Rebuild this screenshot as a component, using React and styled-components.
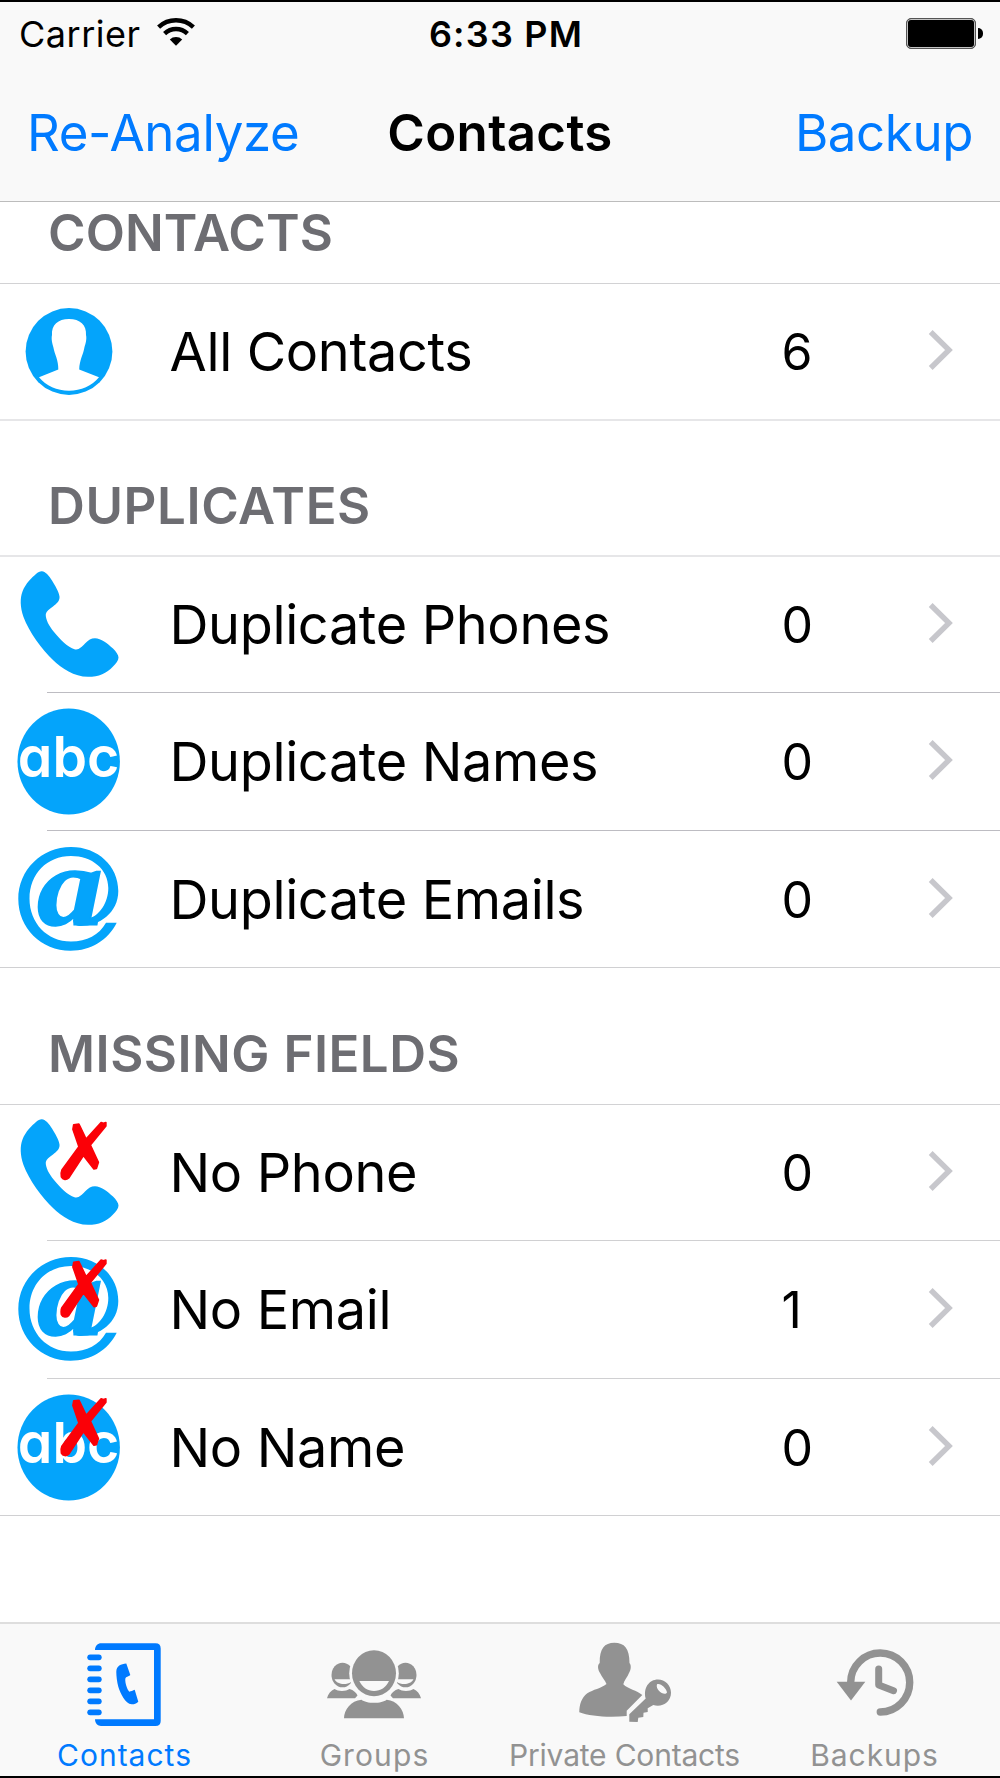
import React, { useState } from "react";
import styled, { createGlobalStyle } from "styled-components";

const BLUE = "#04a4fb";
const TINT = "#007aff";
const GREY = "#929292";

const AbcText = styled.text`
  fill: #fff;
  font-family: Inter, sans-serif;
  font-size: 57px;
  font-weight: 600;
  font-feature-settings: "cv11";
`;

const AtText = styled.text`
  fill: ${BLUE};
  stroke: ${BLUE};
  stroke-width: 1.5px;
  font-family: "Liberation Serif", serif;
  font-size: 115px;
  font-weight: 700;
  font-style: italic;
`;

const sections = [
  {
    title: "CONTACTS",
    height: 82,
    spacing: 0.1,
    rows: [
      { label: "All Contacts", count: 6, icon: "person", height: 137, thick: true },
    ],
  },
  {
    title: "DUPLICATES",
    height: 136,
    spacing: 0.6,
    thick: true,
    rows: [
      { label: "Duplicate Phones", count: 0, icon: "phone", height: 136, dark: true },
      { label: "Duplicate Names", count: 0, icon: "abc", height: 138, drop: 1, dark: true },
      { label: "Duplicate Emails", count: 0, icon: "at", height: 137, drop: 1 },
    ],
  },
  {
    title: "MISSING FIELDS",
    height: 137,
    spacing: 0.5,
    rows: [
      { label: "No Phone", count: 0, icon: "phone", crossed: true, height: 136 },
      { label: "No Email", count: 1, icon: "at", crossed: true, height: 138, drop: 1 },
      { label: "No Name", count: 0, icon: "abc", crossed: true, height: 137, drop: 1 },
    ],
  },
];

const icons = {
  person: (
    <>
      <circle cx="69" cy="67.5" r="43.4" fill={BLUE} />
      <path
        fill="#fff"
        d="M69 35C58 35 51.3 41 52 51C51 55 52.500 60 53.300 63C54.500 70 58.500 76 58.300 85.500L39 93.300C46 102 57 106.700 69 106.700C81 106.700 92 102 99 93.300L79.200 85.500C79.500 76 83.500 70 84.500 63C85.500 60 87 55 86 51C86.700 41 80 35 69 35Z"
      />
    </>
  ),
  phone: (
    <path
      fill={BLUE}
      d="M41.700 14.200C45 14 49 18.500 52 23.500C55 28.500 59 35 59.500 39.500C60 43.500 57 46.500 53 49.500C49 52.500 46.500 54 45.800 57C45.300 62 49 69 54 75C60 82.500 68 90.500 74.500 92.200C79 93.200 81.500 90 85 86.500C88.500 83 91 81.200 95 81.200C101 81.200 107.500 86.500 113 91.500C116 94.500 118.500 98 118.500 100.500C118.500 103.500 116 106.500 113 109.500C106.500 116.500 99 119.800 88 119.800C74 119.800 62 111.500 53 103C42 92.500 29 75 23.500 60C20 50 20 41 22.500 34.500C25.500 26.500 32 20.500 36 17C38 15 39.800 14.200 41.700 14.200Z"
    />
  ),
  abc: (
    <>
      <ellipse cx="68.700" cy="67.500" rx="51.200" ry="53" fill={BLUE} />
      <AbcText x="17.800" y="82.500" textLength="101.500" lengthAdjust="spacingAndGlyphs">abc</AbcText>
    </>
  ),
  at: (
    <>
      <path
        fill={BLUE}
        d="M116.700 90.700C108 108 91 118.700 70.500 118.700C41 118.700 18.300 96 18.300 67C18.300 38 41.500 15 71 15C98 15 118.300 34 118.300 59C118.300 81 99 94 81 94C76 94 73.500 92 73 88L87 81C87 84.500 88.500 85.800 91 85.500C99 83 108.300 71 108.300 56C108.300 37 92 24 71 24C47 24 29.500 42 29.500 66.500C29.500 91 47 109.500 71 109.500C87 109.500 99 103 106 90.700Z"
      />
      <AtText transform="translate(37 92.500) scale(1.15 1)">a</AtText>
    </>
  ),
};

const tabs = [
  {
    label: "Contacts",
    spacing: 1,
    art: (
      <>
        <path d="M95 26C95 22 98 19.300 101 19.300H155.500Q160.700 19.300 160.700 24.500V97Q160.700 102 155.500 102H101C98 102 95 99.500 95 95.300H154V26Z" />
        {[33.3, 44.3, 55.3, 66.3, 77.3, 88.3].map((y) => (
          <rect key={y} x="87.300" y={y - 2.9} width="14.400" height="5.800" rx="2.900" />
        ))}
        <path d="M116.300 48C116.300 42 121 40 126.300 39.600L130.300 51C129 52.500 125.500 52.500 125.300 55C125 59 127 65 129.300 67.700C131 67.500 133 66.500 134.700 65.800L138.300 77.700C136 80 133.500 80.500 131.700 80.300C125 79.500 120.500 69.500 118.300 62.700C117 58 116.300 52 116.300 48Z" />
      </>
    ),
  },
  {
    label: "Groups",
    spacing: 1.1,
    art: (
      <>
        <GroupSide />
        <g transform="translate(248 0) scale(-1 1)">
          <GroupSide />
        </g>
        <ellipse cx="124" cy="49.300" rx="24.800" ry="25.800" fill="#f9f9f9" />
        <ellipse cx="124" cy="49.300" rx="22" ry="23" />
        <path fill="#f9f9f9" d="M109.300 57H139C136 63.500 130.500 67 124 67C117.500 67 112.500 63.500 109.300 57Z" />
        <path d="M94 94.300C94 86 101 76.500 111.500 75.700C116 79.800 132 79.800 136.700 75.700C147 76.500 154 86 154 94.300Z" />
      </>
    ),
  },
  {
    label: "Private Contacts",
    spacing: -0.2,
    art: (
      <>
        <path d="M114.300 18.700C104.500 18.700 99.500 24.500 99.700 39C97 41 98 46 100 49C102 53 105 56.500 106.500 60C101 64.500 93 65.500 87.300 69.300C81.500 74 79.300 80.500 79.300 88.300C90 92.500 110 93.800 126.700 92V86.700L142.300 71C137 66.500 128 65 123.300 60.300C124 56.500 127.500 53 129 49C131 46 131.500 41 129.500 39C129.500 24.500 124.500 18.700 114.300 18.700Z" />
        <path
          fillRule="evenodd"
          d="M145.700 74.500L129.300 90.300V97.700L137.700 98L138.300 93.700L143.300 93L143.500 88.700L147.700 88V84.300L153.300 81C162 83.700 171 78 171 68.700C171 61 165 55.400 158 55.400C149 55.400 143 64 145.700 74.500ZM157 60.300C160 58.500 166.500 64 167 68.500C165 72.500 155 66.500 157 60.300Z"
        />
      </>
    ),
  },
  {
    label: "Backups",
    spacing: 0.9,
    art: (
      <>
        <path
          fill="none"
          stroke="currentColor"
          strokeWidth="7.400"
          strokeLinecap="round"
          d="M100.700 60V58.300A29.500 29.500 0 1 1 130.300 88"
        />
        <path d="M86.700 57.700H115.300L101 76.500Z" />
        <path
          fill="none"
          stroke="currentColor"
          strokeWidth="7"
          strokeLinecap="round"
          strokeLinejoin="round"
          d="M128.700 45V61L143.500 66.700"
        />
      </>
    ),
  },
];

function GroupSide() {
  return (
    <>
      <ellipse cx="92.500" cy="51" rx="11" ry="12.300" />
      <path fill="#f9f9f9" d="M84.500 55.300H101V58C96 61.500 87 60.500 84.500 55.300Z" />
      <path d="M77 74.300C78 70 81 66.500 84.500 65C88 67.500 96 67.500 99.500 65C103.500 66 106.500 69 107.500 71.500L105 74.300Z" />
    </>
  );
}

function Cross({ shift }) {
  return (
    <path
      transform={`translate(-0.6 ${shift})`}
      fill="#fb0007"
      stroke="#fb0007"
      strokeWidth="1.600"
      strokeLinejoin="round"
      d="M101.700 17.500L104 18.200L106.500 17.500V21L91 40L99 57.300L97 63.500L94.500 64L84 50.500L69.300 73C67 75 63.500 75 62 72C61.500 69 61.500 67 62.500 65L79.500 41.700L73.500 24.300L74.300 19.700L79.500 19L81 22L86.700 34Z"
    />
  );
}

export default function App() {
  const [active, setActive] = useState("Contacts");

  return (
    <Screen>
      <GlobalStyle />
      <StatusBar>
        <Carrier>
          <span>Carrier</span>
          <svg width="40" height="30" viewBox="0 0 40 30">
            <g fill="none" stroke="#000" strokeWidth="4.400">
              <path d="M2.600 9.200A25.400 25.400 0 0 1 37.400 9.200" />
              <path d="M8.600 15.600A16.300 16.300 0 0 1 31.400 15.600" />
            </g>
            <path d="M13.800 21.500A9 9 0 0 1 26.200 21.500L20 27.700Z" />
          </svg>
        </Carrier>
        <Clock>6:33 PM</Clock>
        <Battery>
          <BatteryBody />
          <BatteryNub />
        </Battery>
      </StatusBar>
      <NavBar>
        <NavButton $spacing={-0.35}>Re-Analyze</NavButton>
        <NavTitle>Contacts</NavTitle>
        <NavButton $right $spacing={-0.4}>Backup</NavButton>
      </NavBar>

      <List>
        {sections.map((section) => (
          <section key={section.title}>
            <SectionHeader
              $height={section.height}
              $spacing={section.spacing}
              $thick={section.thick}
            >
              {section.title}
            </SectionHeader>
            {section.rows.map((row, i) => (
              <Row
                key={row.label}
                $height={row.height}
                $drop={row.drop}
              >
                <RowIcon width="130" height="134" viewBox="0 0 130 134">
                  {icons[row.icon]}
                  {row.crossed && <Cross shift={i * 0.6} />}
                </RowIcon>
                <Label>{row.label}</Label>
                <Count>{row.count}</Count>
                <Chevron width="30" height="44" viewBox="0 0 30 44">
                  <path d="M3.700 4L22 22L3.700 40" />
                </Chevron>
                <Divider
                  $inset={i < section.rows.length - 1}
                  $thick={row.thick}
                  $dark={row.dark}
                />
              </Row>
            ))}
          </section>
        ))}
      </List>

      <TabBar>
        {tabs.map((tab) => (
          <Tab
            key={tab.label}
            $active={active === tab.label}
            onClick={() => setActive(tab.label)}
          >
            <svg width="250" height="110" viewBox="0 0 250 110" fill="currentColor">
              {tab.art}
            </svg>
            <TabLabel $spacing={tab.spacing}>{tab.label}</TabLabel>
          </Tab>
        ))}
      </TabBar>
    </Screen>
  );
}

const GlobalStyle = createGlobalStyle`
  * {
    box-sizing: border-box;
  }
  body {
    margin: 0;
    background: #fff;
    font-family: Inter, "Liberation Sans", sans-serif;
  }
  button {
    font: inherit;
    border: 0;
    padding: 0;
    background: none;
  }
`;

const Screen = styled.div`
  width: 1000px;
  height: 1778px;
  display: flex;
  flex-direction: column;
  border-top: 2px solid #000;
  border-bottom: 2px solid #000;
  background: #fff;
  overflow: hidden;
`;

const StatusBar = styled.div`
  height: 64px;
  flex: none;
  display: grid;
  grid-template-columns: 1fr auto 1fr;
  align-items: center;
  padding: 0 17px 0 19px;
  background: #f9f9f9;
  font-size: 36px;
  line-height: 44px;
`;

const Carrier = styled.div`
  display: flex;
  align-items: center;
  gap: 15px;
  letter-spacing: 0.5px;
  svg {
    margin-top: -2px;
  }
`;

const Clock = styled.div`
  padding-left: 10px;
  font-weight: 600;
  letter-spacing: 1.2px;
`;

const Battery = styled.div`
  display: flex;
  justify-content: flex-end;
  align-items: center;
  gap: 2px;
  padding-bottom: 1px;
`;

const BatteryBody = styled.div`
  width: 70px;
  height: 31px;
  border: 1px solid #555;
  border-radius: 5px;
  background: #000;
  box-shadow: inset 0 0 0 1px #c4c4c4;
`;

const BatteryNub = styled.div`
  width: 5px;
  height: 11px;
  border-radius: 0 5px 5px 0;
  background: #000;
`;

const NavBar = styled.div`
  height: 136px;
  flex: none;
  display: grid;
  grid-template-columns: 1fr auto 1fr;
  align-items: center;
  padding: 0 27px 3px 27px;
  background: #f9f9f9;
  border-bottom: 1px solid #bcbcbc;
  font-size: 51px;
`;

const NavButton = styled.button`
  color: ${TINT};
  text-align: ${(p) => (p.$right ? "right" : "left")};
  letter-spacing: ${(p) => p.$spacing}px;
`;

const NavTitle = styled.div`
  font-weight: 600;
  letter-spacing: 0.35px;
`;

const List = styled.div`
  flex: 1;
`;

const SectionHeader = styled.div`
  height: ${(p) => p.$height}px;
  display: flex;
  align-items: flex-end;
  padding: 0 0 ${(p) => (p.$thick ? 18 : 19)}px 48px;
  border-bottom: ${(p) => (p.$thick ? "2px solid #e6e6e8" : "1px solid #d2d2d4")};
  color: #6d6d72;
  font-size: 51px;
  line-height: 62px;
  font-weight: 600;
  letter-spacing: ${(p) => p.$spacing}px;
`;

const Row = styled.div`
  position: relative;
  height: ${(p) => p.$height}px;
  display: grid;
  grid-template-columns: 169.5px 612px 145.5px 1fr;
  align-items: start;
  padding-top: ${(p) => p.$drop || 0}px;
  color: #000;
`;

const RowIcon = styled.svg`
  overflow: visible;
`;

const Label = styled.div`
  padding-top: 35px;
  font-size: 54px;
  line-height: 66px;
  letter-spacing: -0.35px;
  white-space: nowrap;
`;

const Count = styled.div`
  padding-top: 37px;
  font-size: 50px;
  line-height: 62px;
`;

const Chevron = styled.svg`
  margin-top: 44px;
  fill: none;
  stroke: #c7c7cc;
  stroke-width: 5.4px;
`;

/* hairline laid over the bottom edge of a row */
const Divider = styled.div`
  position: absolute;
  left: ${(p) => (p.$inset ? 47 : 0)}px;
  right: 0;
  bottom: 0;
  height: ${(p) => (p.$thick ? 2 : 1)}px;
  background: ${(p) => (p.$thick ? "#e6e6e8" : p.$dark ? "#bdbcc2" : "#d0d0d2")};
`;

const TabBar = styled.div`
  height: 154px;
  flex: none;
  display: grid;
  grid-template-columns: repeat(4, 250px);
  background: #f9f9f9;
  border-top: 2px solid #dedede;
`;

const Tab = styled.button`
  display: flex;
  flex-direction: column;
  align-items: center;
  color: ${(p) => (p.$active ? TINT : GREY)};
`;

const TabLabel = styled.span`
  margin-top: 3px;
  padding-right: 1px;
  font-size: 30px;
  line-height: 36px;
  white-space: nowrap;
  letter-spacing: ${(p) => p.$spacing}px;
`;
